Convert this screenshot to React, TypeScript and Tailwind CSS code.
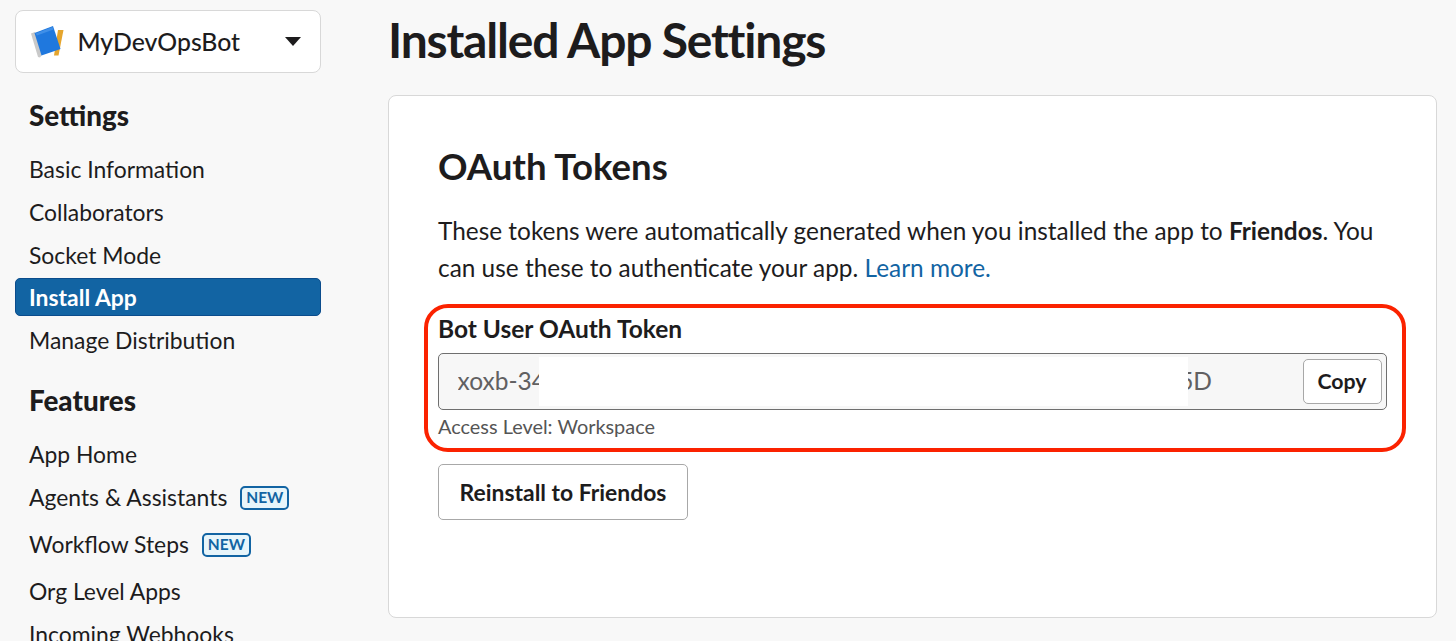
const font = { fontFamily: "Lato, sans-serif" };

function NewBadge() {
  return (
    <span className="flex h-[24px] w-[49px] items-center justify-center rounded-[5px] border-[2px] border-[#1264a3] bg-[#e8f5fa] text-[15.5px] font-bold text-[#1264a3]">
      NEW
    </span>
  );
}

function BookIcon() {
  return (
    <svg width="34" height="34" viewBox="30 25 34 34" className="shrink-0">
      <polygon points="58,30 63.5,30 58.5,55.5 54,55.5" fill="#e5a52d" />
      <polygon points="31,33.5 35,32 42,55 40,57.5 38,57" fill="#c9c9c9" />
      <polygon points="34.5,33 53,26 60.5,49 41.5,55.5" fill="#1f78de" />
      <polygon points="35.5,33.5 52.5,27 53.5,29.5 37,35.5" fill="#3f8fe8" />
    </svg>
  );
}

function NavItem({ label, active }: { label: string; active?: boolean }) {
  if (active) {
    return (
      <div className="h-[42px] pt-[1px]">
        <div className="flex h-[38px] items-center rounded-[5px] border border-[#0b4c8c] bg-[#1264a3] pl-[13px] pt-[1px] text-[22.9px] font-bold text-white">
          {label}
        </div>
      </div>
    );
  }
  return <div className="flex h-[43px] items-center pl-[14px] text-[22.9px] text-[#1d1c1d]">{label}</div>;
}

export default function App() {
  return (
    <div className="flex h-[641px] w-[1456px] overflow-hidden bg-[#f8f8f8]" style={font}>
      <aside className="ml-[15px] w-[306px] shrink-0 pt-[10px]">
        <div className="flex h-[63px] items-center rounded-[8px] border-[1.5px] border-[#d8d8d8] bg-white pl-[13.5px] pr-[19.5px]">
          <BookIcon />
          <span className="ml-[14px] flex-1 text-[24.8px] font-medium text-[#1d1c1d]">MyDevOpsBot</span>
          <span className="h-0 w-0 border-x-[8px] border-t-[9px] border-x-transparent border-t-[#1d1c1d]" />
        </div>
        <h2 className="mt-[23px] pl-[14px] text-[27.8px] leading-[40px] font-black text-[#1d1c1d]">Settings</h2>
        <div className="mt-[12px] flex flex-col">
          <NavItem label="Basic Information" />
          <NavItem label="Collaborators" />
          <NavItem label="Socket Mode" />
          <NavItem label="Install App" active />
          <NavItem label="Manage Distribution" />
        </div>
        <h2 className="mt-[19px] pl-[14px] text-[27.8px] leading-[40px] font-black text-[#1d1c1d]">Features</h2>
        <div className="mt-[12px] flex flex-col">
          <NavItem label="App Home" />
          <div className="flex h-[43px] items-center gap-[13px]">
            <NavItem label="Agents & Assistants" />
            <NewBadge />
          </div>
          <div className="mt-[4px] flex h-[43px] items-center gap-[13px]">
            <NavItem label="Workflow Steps" />
            <NewBadge />
          </div>
          <div className="mt-[4px]"><NavItem label="Org Level Apps" /></div>
          <NavItem label="Incoming Webhooks" />
        </div>
      </aside>

      <main className="ml-[67px] w-[1049px] shrink-0">
        <h1 className="mt-[10px] text-[48px] leading-[60px] font-bold tracking-[-1.2px] text-[#1d1c1d]">Installed App Settings</h1>
        <section className="mt-[25px] h-[523px] rounded-[8px] border-[1.5px] border-[#d8d8d8] bg-white pl-[49px]">
          <h2 className="mt-[46px] text-[36.6px] leading-[48px] font-bold text-[#1d1c1d]">OAuth Tokens</h2>
          <p className="mt-[22px] w-[960px] text-[24.4px] leading-[37px] text-[#1d1c1d]">
            These tokens were automatically generated when you installed the app to <b>Friendos</b>. You can use these to authenticate your app. <span className="text-[#1264a3]">Learn more.</span>
          </p>
          <div className="relative mt-[27px] w-[949px]">
            <div className="pointer-events-none absolute left-[-14px] top-[-9px] h-[148px] w-[982px] rounded-[24px] border-[4px] border-[#fb2200]" />
            <div className="text-[24.5px] leading-[32px] font-bold text-[#1d1c1d]">Bot User OAuth Token</div>
            <div className="mt-[8px] flex h-[57px] items-center rounded-[5px] border-[1.5px] border-[#6f6f6f] bg-[#f7f7f7] pl-[18.5px] pr-[4.5px] text-[24.5px] text-[#616061]">
              <span className="w-[81.5px] shrink-0 overflow-hidden whitespace-nowrap">xoxb-34</span>
              <span className="h-[49px] w-[649px] shrink-0 bg-white" />
              <span className="flex w-[24px] shrink-0 justify-end overflow-hidden whitespace-nowrap">5D</span>
              <span className="ml-auto flex h-[45px] w-[79px] shrink-0 items-center justify-center rounded-[5px] border-[1.5px] border-[#a8a8a8] bg-white text-[21.3px] font-bold text-[#1d1c1d]">Copy</span>
            </div>
            <div className="mt-[2px] text-[19.9px] leading-[28px] text-[#555555]">Access Level: Workspace</div>
          </div>
          <div className="mt-[24px] flex h-[56px] w-[250px] items-center justify-center rounded-[5px] border-[1.5px] border-[#a8a8a8] bg-white text-[22.9px] font-bold text-[#1d1c1d]">
            Reinstall to Friendos
          </div>
        </section>
      </main>
    </div>
  );
}
